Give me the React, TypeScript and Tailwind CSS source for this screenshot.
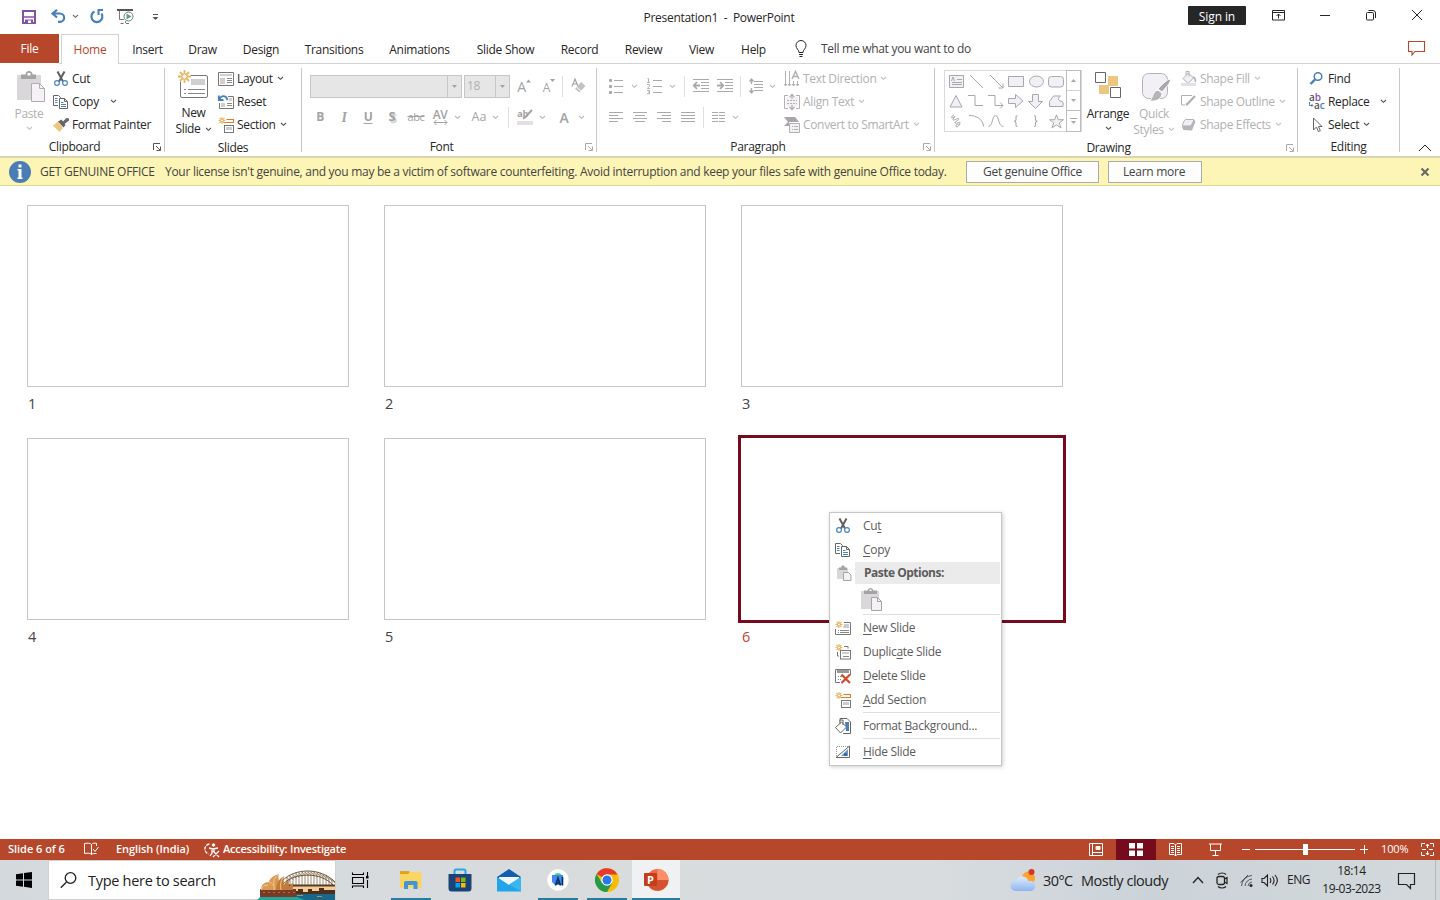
import React from "react";

type Kids = { children?: React.ReactNode };

function S({ w, h, c = "", children }: Kids & { w: number; h: number; c?: string }) {
  return (
    <svg width={w} height={h} viewBox={`0 0 ${w} ${h}`} fill="none" stroke="currentColor" strokeWidth="1" className={`shrink-0 overflow-visible ${c}`}>
      {children}
    </svg>
  );
}

function Chev({ c = "" }: { c?: string }) {
  return (
    <S w={7} h={5} c={c}>
      <path d="M1 1l2.500 2.300L6 1" strokeWidth="1.100" opacity=".8" />
    </S>
  );
}

/* ---------- shared icons ---------- */
const Scissors = () => (
  <S w={16} h={16}>
    <path d="M4.500.5L10 10.500M11.500.5L6 10.500" stroke="#5f5f5f" strokeWidth="2" />
    <circle cx="4" cy="12" r="2.400" stroke="#4a86bd" strokeWidth="1.200" fill="#fff" />
    <circle cx="12" cy="12" r="2.400" stroke="#4a86bd" strokeWidth="1.200" fill="#fff" />
  </S>
);
const CopyIcon = () => (
  <S w={16} h={16}>
    <path d="M5 11.500H.5V1.500h5l2 2V5" stroke="#666" fill="#fff" />
    <path d="M2 4.500h2.500M2 6.500h2.500M2 8.500h2.500" stroke="#4a86bd" />
    <path d="M6.500 4.500h5l3 3v7h-8z" stroke="#666" fill="#fff" />
    <path d="M11.500 4.500v3h3" stroke="#666" />
    <path d="M8 8.500h2.500M8 10.500h5M8 12.500h5" stroke="#4a86bd" />
  </S>
);
const Brush = () => (
  <S w={16} h={14}>
    <path d="M0 7.500l5-4 5 6.500-3.500 4z" fill="#edc77f" stroke="none" />
    <path d="M5 3.500l3.500-2 4 5.500-2 2.500z" fill="#666" stroke="none" />
    <path d="M9.500 4l1-1L13.500 0 16 .5v2L11.500 6z" fill="#666" stroke="none" />
  </S>
);
const BigPaste = () => (
  <S w={30} h={31}>
    <rect x="1" y="4" width="24" height="25" rx="1" fill="#dad7da" stroke="none" />
    <path d="M5 3.500h4.500a3.500 3.500 0 017 0H20V8H5z" fill="#a6a3a6" stroke="none" />
    <rect x="11.500" y="2" width="3" height="2.500" fill="#fff" stroke="none" />
    <path d="M15.500 12.500h8l5 5v13h-13z" fill="#f5f1f7" stroke="#b0adb0" />
    <path d="M23.500 12.500v5h5" stroke="#b0adb0" />
  </S>
);
const SmallPaste = () => (
  <S w={16} h={16}>
    <path d="M1 3h11v11H1z" fill="#dad7da" stroke="none" />
    <path d="M3 5V2.500h2L6 .5h2l1 2h2V5z" fill="#a6a3a6" stroke="none" />
    <path d="M7.500 7.500h5l2.500 2.500v5.500H7.500z" fill="#f5f1f7" stroke="#a6a3a6" />
  </S>
);
const Star = () => (
  <>
    <path d="M4 0v2.500M4 4.500V7M.5 3.500H3M5 3.500h2.500M1.500 1l1.500 1.500M6.500 1L5 2.500M1.500 6L3 4.500M6.500 6L5 4.500" stroke="#e8b765" strokeWidth="1.100" />
    <circle cx="4" cy="3.500" r="1.400" stroke="#e8b765" />
  </>
);
const SectionIcon = () => (
  <S w={16} h={16}>
    <Star />
    <path d="M8.500 2.500h7M15.500 2v4M6 5.500h10" stroke="#e07a2c" />
    <rect x="6.500" y="8.500" width="9" height="7" stroke="#777" fill="#fff" />
    <path d="M8 10h6v3H8z" fill="#ccc" stroke="none" />
  </S>
);

/* ---------- title bar ---------- */
function TitleBar() {
  return (
    <header className="flex h-[34px] shrink-0 items-center">
      <div className="flex w-[500px] items-center pl-[22px] text-[#4a7fb8]">
        <S w={14} h={14}>
          <path d="M1 1h12v12H1z" stroke="#8453a9" strokeWidth="2" />
          <path d="M2 7h10" stroke="#8453a9" strokeWidth="1.500" />
          <path d="M3 9.500h8V13H3z" fill="#8453a9" stroke="none" />
          <path d="M6 10.500h3V13H6z" fill="#fff" stroke="none" />
        </S>
        <S w={15} h={14} c="-mt-[2px] ml-[15px]">
          <path d="M6 .8L1.500 4.500 6 8.500M2 4.500h7a4 4 0 010 8.300H7" stroke="#477fb9" strokeWidth="2.200" />
        </S>
        <Chev c="-mt-[2px] ml-[6px] text-[#444]" />
        <S w={14} h={15} c="-mt-[2px] ml-[11px]">
          <path d="M4.500 2.600A5.500 5.500 0 1011.500 4.500" stroke="#477fb9" strokeWidth="2.200" />
          <path d="M13 1H8.500v5" stroke="#477fb9" strokeWidth="2" />
        </S>
        <S w={17} h={16} c="ml-[13px]">
          <path d="M0 1h16" stroke="#555" strokeWidth="2" />
          <path d="M2.500 2v8.500H7M8.500 12v2M3.500 14.500h3M9 14.500h3" stroke="#777" />
          <circle cx="11.500" cy="7.500" r="4.500" fill="#fff" stroke="#777" />
          <path d="M9.500 4.500l5 3-5 3z" fill="#58a37e" stroke="none" />
        </S>
        <S w={7} h={8} c="ml-[18px] text-[#555]">
          <path d="M1 1.500h5" />
          <path d="M.5 4h6l-3 3z" fill="#555" stroke="none" />
        </S>
      </div>
      <div className="w-[438px] pt-px text-center text-[12px] tracking-[-0.300px]">Presentation1&nbsp; -&nbsp; PowerPoint</div>
      <div className="-mt-[3px] ml-[250px] flex h-[19px] w-[58px] items-center justify-center rounded-[1px] bg-[#262626] pt-[2px] text-[12px] tracking-[-0.100px] text-white">Sign in</div>
      <S w={13} h={11} c="-mt-[3px] ml-[26px]">
        <path d="M.5.500h12v9.500H.5zM.5 2.500h12M6.500 8.500V4M4.500 6l2-2 2 2" />
      </S>
      <S w={10} h={10} c="-mt-[3px] ml-[35px]"><path d="M0 4.500h10" /></S>
      <S w={10} h={11} c="-mt-[3px] ml-[36px]">
        <rect x=".5" y="2.500" width="7" height="7.500" rx="1" />
        <path d="M2.500.5H7a2.500 2.500 0 012.500 2.500v5" />
      </S>
      <S w={10} h={10} c="-mt-[4px] ml-[36px]"><path d="M0 0l10 10M10 0L0 10" /></S>
    </header>
  );
}

/* ---------- tabs ---------- */
function Tab({ w, children }: Kids & { w: string }) {
  return <div className={`flex shrink-0 items-center justify-center border-b border-[#d2d2d2] pt-[2px] ${w}`}>{children}</div>;
}
function Tabs() {
  return (
    <nav className="flex h-[30px] shrink-0 text-[12px] tracking-[-0.290px]">
      <div className="flex h-[29px] w-[59px] items-center justify-center bg-[#b7472a] pt-px text-white">File</div>
      <div className="w-[2px] border-b border-[#d2d2d2]" />
      <div className="flex w-[58px] items-center justify-center border-x border-t border-[#d2d2d2] pt-px text-[#b7472a]">Home</div>
      <Tab w="w-[57px]">Insert</Tab>
      <Tab w="w-[53px]">Draw</Tab>
      <Tab w="w-[64px]">Design</Tab>
      <Tab w="w-[82px]">Transitions</Tab>
      <Tab w="w-[89px]">Animations</Tab>
      <Tab w="w-[83px]">Slide Show</Tab>
      <Tab w="w-[65px]">Record</Tab>
      <Tab w="w-[63px]">Review</Tab>
      <Tab w="w-[53px]">View</Tab>
      <Tab w="w-[51px]">Help</Tab>
      <div className="flex flex-1 items-center border-b border-[#d2d2d2] pl-[16px]">
        <S w={12} h={17}>
          <path d="M4 12.500c0-3-3-3.500-3-7a5 5 0 0110 0c0 3.500-3 4-3 7zM4 14.500h4M4.500 16.500h3" />
        </S>
        <span className="ml-[14px] text-[#444]">Tell me what you want to do</span>
        <S w={17} h={15} c="ml-auto mr-[15px] text-[#b7472a]">
          <path d="M.5.500h16v10H7l-3 3.500v-3.500H.5z" strokeWidth="1.100" />
        </S>
      </div>
    </nav>
  );
}

/* ---------- ribbon ---------- */
function Group({ w, label, lw = "", off = false, children }: Kids & { w: string; label: string; lw?: string; off?: boolean }) {
  return (
    <section className={`flex shrink-0 flex-col ${w}`}>
      <div className="flex h-[74px] pt-[3px]">{children}</div>
      <div className="flex h-[20px] items-center pt-[2px]">
        <div className={`flex-1 text-center ${lw ? "pr-[4px]" : ""}`}>{label}</div>
        {lw && (
          <div className={`${lw} ${off ? "text-[#aaa]" : "text-[#555]"}`}>
            <S w={8} h={8}>
              <path d="M.5 7V.5H7M3 3l4 4M7.500 3.500v4h-4" />
            </S>
          </div>
        )}
      </div>
    </section>
  );
}
const Sep = () => <div className="mt-[4px] h-[84px] w-px shrink-0 bg-[#c8c8c8]" />;
const MiniSep = ({ c }: { c: string }) => <div className={`h-[21px] w-px bg-[#dedede] ${c}`} />;
function Row({ icon, children, c = "" }: Kids & { icon: React.ReactNode; c?: string }) {
  return (
    <div className="flex h-[23px] items-center whitespace-nowrap">
      <div className="flex w-[19px] shrink-0">{icon}</div>
      <span>{children}</span>
      {c && <Chev c={c} />}
    </div>
  );
}
const Cell = ({ w = "w-[24px]", children }: Kids & { w?: string }) => (
  <div className={`flex shrink-0 items-center justify-center ${w}`}>{children}</div>
);
const Lines = ({ d, w = 16 }: { d: string; w?: number }) => (
  <S w={w} h={14}><path d={d} shapeRendering="crispEdges" /></S>
);

function Clipboard() {
  return (
    <Group w="w-[164px]" label="Clipboard" lw="w-[11px]">
      <div className="flex w-[52px] flex-col items-center pl-[6px] text-[#b1b1b1]">
        <div className="mt-[4px] h-[32px] pl-[4px]"><BigPaste /></div>
        <span className="mt-[2px] leading-[18px]">Paste</span>
        <Chev c="mt-[3px]" />
      </div>
      <div className="pl-[1px]">
        <Row icon={<Scissors />}>Cut</Row>
        <Row icon={<CopyIcon />} c="ml-[11px]">Copy</Row>
        <Row icon={<Brush />}>Format Painter</Row>
      </div>
    </Group>
  );
}
function Slides() {
  return (
    <Group w="w-[136px]" label="Slides">
      <div className="flex w-[53px] flex-col items-center pl-[4px]">
        <div className="mt-[3px] h-[34px]">
          <S w={31} h={30}>
            <rect x="2.500" y="5.500" width="27" height="22" rx="1.500" stroke="#777" />
            <path d="M13 9h14v6H13z" fill="#cfcfcf" stroke="none" />
            <path d="M6 19.500h2M10 19.500h17M6 23.500h2M10 23.500h17" stroke="#888" />
            <circle cx="6.500" cy="6.500" r="6.500" fill="#fff" stroke="none" />
            <path d="M6.500 0v4M6.500 9v4M0 6.500h4M9 6.500h4M2 2l3 3M11 2L8 5M2 11l3-3M11 11L8 8" stroke="#e8b765" strokeWidth="1.800" />
            <circle cx="6.500" cy="6.500" r="2.500" stroke="#e8b765" />
          </S>
        </div>
        <span className="mt-px leading-[16px]">New</span>
        <span className="flex items-center gap-[4px] leading-[16px]">Slide <Chev /></span>
      </div>
      <div>
        <Row c="ml-[4px]" icon={<S w={16} h={14}><path d="M.5.500h15v13H.5z" stroke="#777" /><path d="M2 2h12v2H2zM2 6h5v6H2z" fill="#cfcfcf" stroke="none" /><path d="M9 6.500h5M9 8.500h5M9 10.500h5" stroke="#888" /></S>}>Layout</Row>
        <Row icon={<S w={16} h={15}><path d="M10 2.500h5.500v12h-14V9" stroke="#777" /><path d="M3 9h4v4H3zM11 4h3v3h-3z" fill="#cfcfcf" stroke="none" /><path d="M9 9.500h5M9 11.500h5" stroke="#888" /><path d="M.8 1.500V6H5.500M1.500 5C3.500 1 8.500 1 9.500 6" stroke="#477fb9" strokeWidth="1.800" /></S>}>Reset</Row>
        <Row c="ml-[4px]" icon={<SectionIcon />}>Section</Row>
      </div>
    </Group>
  );
}
function FontGroup() {
  return (
    <Group w="w-[294px]" label="Font" lw="w-[11px]" off>
      <div className="flex flex-col text-[#a3a3a3]">
        <div className="flex h-[38px] items-center pl-[8px]">
          <div className="flex h-[23px] w-[152px] border border-[#c6c6c6] bg-[#e6e6e6]">
            <div className="w-[137px] border-r border-[#c6c6c6]" />
            <Cell w="w-[13px]"><S w={5} h={3}><path d="M0 0h5L2.500 3z" fill="currentColor" stroke="none" /></S></Cell>
          </div>
          <div className="ml-[2px] flex h-[23px] w-[46px] border border-[#c6c6c6] bg-[#e6e6e6]">
            <div className="flex w-[31px] items-center border-r border-[#c6c6c6] pl-[2px] text-[12px] text-[#b1b1b1]">18</div>
            <Cell w="w-[13px]"><S w={5} h={3}><path d="M0 0h5L2.500 3z" fill="currentColor" stroke="none" /></S></Cell>
          </div>
          <Cell w="w-[28px]"><span className="text-[14px] font-medium">A</span><S w={5} h={12}><path d="M0 2.500h5L2.500-.5z" fill="currentColor" stroke="none" /></S></Cell>
          <Cell w="w-[22px]"><span className="pt-[3px] text-[12px] font-medium">A</span><S w={5} h={12}><path d="M0-1h5L2.500 2z" fill="currentColor" stroke="none" /></S></Cell>
          <MiniSep c="ml-[2px]" />
          <S w={15} h={16} c="ml-[8px]">
            <path d="M1 8.500L4 1l3 7.500M2 6h4" strokeWidth="1.200" />
            <path d="M10 4l4.500 4-6 6.500L4 11z" fill="#c4c0c4" stroke="none" />
            <path d="M5.500 9l4.500 4" stroke="#fff" />
          </S>
        </div>
        <div className="flex h-[24px] items-center pl-[6px]">
          <Cell><b>B</b></Cell>
          <Cell><i className="font-['Liberation_Serif'] text-[14px] font-bold">I</i></Cell>
          <Cell><b className="text-[12px] underline underline-offset-2">U</b></Cell>
          <Cell><b className="text-[13px] [text-shadow:1.5px_1.5px_1px_#ccc]">S</b></Cell>
          <Cell><span className="text-[11px] line-through">abc</span></Cell>
          <Cell>
            <div className="flex flex-col items-center">
              <span className="h-[11px] text-[12px] font-semibold leading-[12px] tracking-[-0.500px]">AV</span>
              <S w={15} h={5}><path d="M1 2.500h13M3.500 0L1 2.500 3.500 5M11.500 0L14 2.500 11.500 5" /></S>
            </div>
          </Cell>
          <Cell w="w-[10px]"><Chev /></Cell>
          <Cell w="w-[34px]"><span className="text-[12.500px] font-medium tracking-normal">Aa</span></Cell>
          <Chev c="-ml-[4px]" />
          <MiniSep c="ml-[9px]" />
          <Cell w="w-[31px]">
            <S w={16} h={16}>
              <text x="0" y="8" fontSize="9.500" fontWeight="bold" fill="#a3a3a3" stroke="none">ab</text>
              <path d="M15 1L8 8.500l-2 1" strokeWidth="2" />
              <path d="M0 12h16v4H0z" fill="#e4dfe6" stroke="none" />
            </S>
          </Cell>
          <Chev c="-ml-[1px]" />
          <Cell w="w-[36px]"><span className="text-[14px] font-semibold">A</span></Cell>
          <Chev c="-ml-[4px]" />
        </div>
      </div>
    </Group>
  );
}
function Paragraph() {
  return (
    <Group w="w-[337px]" label="Paragraph" lw="w-[11px]" off>
      <div className="flex w-[187px] flex-col text-[#aaa]">
        <div className="flex h-[38px] items-center pl-[12px]">
          <S w={14} h={16}><path d="M5 2.500h9M5 8.500h9M5 14.500h9" /><path d="M.5 1h2L3 1.500v2l-.5.5h-2L0 3.500v-2zM.5 7h2l.5.500v2l-.5.5h-2L0 9.500v-2zM.5 13h2l.5.500v2l-.5.5h-2L0 15.500v-2z" fill="currentColor" stroke="none" /></S>
          <Chev c="ml-[8px]" />
          <S w={15} h={16} c="ml-[9px]">
            <path d="M6 2.500h9M6 8.500h9M6 14.500h9" />
            <path d="M.5.500h1v4M0 4.500h3M0 6.500h2.500v1.500L.3 10.500h2.700M0 12.500h2.500v3.200H0M1 14h1.500" strokeWidth=".9" />
          </S>
          <Chev c="ml-[7px]" />
          <MiniSep c="ml-[8px]" />
          <S w={16} h={14} c="ml-[8px]"><path d="M0 .5h16M8 3.500h8M8 6.500h8M8 9.500h8M0 12.500h16" /><path d="M0 6.500h7M4 3L.8 6.500 4 10" strokeWidth="1.800" /></S>
          <S w={16} h={14} c="ml-[8px]"><path d="M0 .5h16M8 3.500h8M8 6.500h8M8 9.500h8M0 12.500h16" /><path d="M0 6.500h7M3 3l3.200 3.500L3 10" strokeWidth="1.800" /></S>
          <MiniSep c="ml-[7px]" />
          <S w={14} h={16} c="ml-[8px]"><path d="M5 3.500h9M5 6.500h9M5 9.500h9M5 12.500h9" /><path d="M2.500 1v5M.5 3.500l2-2.500 2 2.500M2.500 10v5M.5 12.500l2 2.500 2-2.500" strokeWidth="1.400" /></S>
          <Chev c="ml-[6px]" />
        </div>
        <div className="flex h-[24px] items-center pl-[12px]">
          <Cell w="w-[14px]"><Lines w={14} d="M0 2.500h14M0 5.500h9M0 8.500h14M0 11.500h9" /></Cell>
          <Cell w="w-[14px] ml-[10px]"><Lines w={14} d="M0 2.500h14M2 5.500h10M0 8.500h14M2 11.500h10" /></Cell>
          <Cell w="w-[14px] ml-[10px]"><Lines w={14} d="M0 2.500h14M5 5.500h9M0 8.500h14M5 11.500h9" /></Cell>
          <Cell w="w-[14px] ml-[10px]"><Lines w={14} d="M0 2.500h14M0 5.500h14M0 8.500h14M0 11.500h14" /></Cell>
          <MiniSep c="ml-[8px]" />
          <Cell w="w-[14px] ml-[8px]"><Lines w={14} d="M0 2.500h6M7 2.500h6M0 5.500h6M7 5.500h6M0 8.500h6M7 8.500h6M0 11.500h6M7 11.500h6" /></Cell>
          <Chev c="ml-[6px]" />
        </div>
      </div>
      <div className="text-[#b1b1b1]">
        <Row c="ml-[4px]" icon={<S w={16} h={16}><path d="M1.500 0v15M5.500 0v15M9.500 10v5M13.500 10v5M0 13l1.500 2L3 13M4 13l1.500 2L7 13M8 13l1.500 2L11 13M12 13l1.500 2L15 13" /><path d="M8 8l3.500-7.500L15 8M9 5.500h5" strokeWidth="1.500" /></S>}>Text Direction</Row>
        <Row c="ml-[4px]" icon={<S w={16} h={16}><path d="M4 1.500H.5v13H4M12 1.500h3.500v13H12" /><path d="M2 3h12v10H2z" fill="#f5f1f7" stroke="none" /><path d="M3 6.500h10M3 9.500h10" strokeDasharray="2 1" /><path d="M8 0v5M5.500 3L8 .5 10.500 3M8 11v5M5.500 13L8 15.500l2.500-2.500" strokeWidth="1.300" /></S>}>Align Text</Row>
        <Row c="ml-[4px]" icon={<S w={16} h={16}><path d="M0 0h11l4 5H5v4H0l4-4z" fill="#a9a6a9" stroke="none" /><path d="M5.500 6.500h10v9h-10z" fill="#f5f1f7" /><path d="M8 9.500h1M10 9.500h4M8 12.500h1M10 12.500h4" /></S>}>Convert to SmartArt</Row>
      </div>
    </Group>
  );
}
function Drawing() {
  const f = "#f3eff6";
  return (
    <Group w="w-[362px]" label="Drawing" lw="w-[11px]" off>
      <div className="ml-[9px] mt-[3px] flex h-[62px] w-[138px] border border-[#d9d9d9] text-[#a8a8a8]">
        <div className="grid w-[122px] grid-cols-[20px_20px_20px_20px_20px_20px] grid-rows-[20px_20px_20px] place-items-center pl-px">
          <S w={15} h={13}><path d="M.5.500h14v12H.5z" fill={f} /><path d="M8 4.500h5M3 7.500h10M3 9.500h10M2.500 6l1.500-4 1.500 4" /></S>
          <S w={15} h={15}><path d="M1 1l13 13" /></S>
          <S w={15} h={15}><path d="M1 1l13 13M14 9.500V14H9.500" /></S>
          <S w={16} h={13}><path d="M.5 1.500h15v10H.5z" fill={f} /></S>
          <S w={15} h={13}><ellipse cx="7.500" cy="6.500" rx="7" ry="5.500" fill={f} /></S>
          <S w={16} h={13}><rect x=".5" y="1.500" width="15" height="10.500" rx="3" fill={f} /></S>
          <S w={14} h={14}><path d="M7 1.500l6 11.500H1z" fill={f} /></S>
          <S w={16} h={14}><path d="M0 1.500h7v10h8" /></S>
          <S w={16} h={14}><path d="M0 1.500h7v10h8M12 8.500l3 3-3 3" /></S>
          <S w={16} h={14}><path d="M.5 4.500h7v-4l7.500 6.500-7.500 6.500v-4h-7z" fill={f} /></S>
          <S w={16} h={15}><path d="M4.500.500h6v7h4L7.500 14.500l-7-7h4z" fill={f} /></S>
          <S w={15} h={14}><path d="M.5 12.500v-5l4-5.500h7c-4 3-2 5 2 5.500 1 1 .5 4 .5 5z" fill={f} /></S>
          <S w={12} h={15}><path d="M4 1C0 3 1 5 4 3 7 1 2 5 3 6c1 1 6-3 6-1 0 1-5 3-4 4 2 1 5-2 5 0 0 3-4 5-4 3s3-3 3-1" /></S>
          <S w={15} h={14}><path d="M0 1.500c8 0 14 4 14.500 11" /></S>
          <S w={16} h={14}><path d="M.5 12.500C5 12 4 1.500 7.500 1.500S10 12.500 15.500 12.500" /></S>
          <S w={6} h={13}><path d="M4.500.8H4Q3 .8 3 2v2.700Q3 6 1 6.200 3 6.500 3 8v2.300q0 1.200 1 1.200h.5" strokeWidth="1.100" /></S>
          <S w={6} h={13}><path d="M1 .8h.5q1 0 1 1.200v2.700q0 1.300 2 1.500-2 .3-2 1.800v2.300q0 1.200-1 1.200H1" strokeWidth="1.100" /></S>
          <S w={15} h={15}><path d="M7.500.8l1.800 4.900h5.200l-4.200 3.200 1.700 5.100-4.500-3.200L3 14l1.700-5.100L.5 5.700h5.200z" fill={f} /></S>
        </div>
        <div className="-my-px flex w-[15px] flex-col border border-[#bdbdbd]">
          <Cell w="h-[20px] border-b border-[#d4d4d4]"><S w={5} h={3}><path d="M0 3h5L2.500 0z" fill="currentColor" stroke="none" /></S></Cell>
          <Cell w="h-[20px] border-b border-[#bdbdbd]"><S w={5} h={3}><path d="M0 0h5L2.500 3z" fill="currentColor" stroke="none" /></S></Cell>
          <Cell w="h-[20px]"><S w={7} h={7}><path d="M0 .5h7" /><path d="M1 3h5L3.500 6z" fill="currentColor" stroke="none" /></S></Cell>
        </div>
      </div>
      <div className="flex w-[52px] flex-col items-center">
        <div className="mt-[4px] h-[33px]">
          <S w={28} h={28} c="-ml-px">
            <path d="M14 5h10v10H14zM5 14h10v9H5z" fill="#edc77f" stroke="none" />
            <path d="M1.500 1.500h10v10h-10zM16.500 16.500h10v10h-10z" fill="#fff" stroke="#666" />
          </S>
        </div>
        <span className="mt-px leading-[18px]">Arrange</span>
        <Chev c="mt-[3px]" />
      </div>
      <div className="flex w-[44px] flex-col items-center pr-[4px] text-[#b1b1b1]">
        <div className="mt-[5px] h-[32px]">
          <S w={31} h={31} c="ml-[2px]">
            <rect x="2.500" y="1.500" width="25" height="25" rx="6" fill={f} stroke="#b5b2b5" />
            <path d="M30 7c2 3-5 9-8 13l-4-3c4-5 10-10 12-10z" fill="#a9a6a9" stroke="#fff" />
            <path d="M18 18l4 3c0 5-4 9-13 8 4-1 3-10 9-11z" fill="#b8b5b8" stroke="#fff" />
          </S>
        </div>
        <span className="mt-px leading-[17px]">Quick</span>
        <span className="flex items-center gap-[4px] leading-[15px]">Styles <Chev /></span>
      </div>
      <div className="pl-[3px] text-[#b1b1b1]">
        <Row c="ml-[4px]" icon={<S w={16} h={16}><path d="M2 7.500L7.500 2l5 5L7 12.500zM5 4V.5h3v5" fill={f} /><path d="M12 6c2 1 3 3 2 5" strokeWidth="1.600" /><path d="M0 12h15v3H0z" fill="#e4dfe6" stroke="none" /></S>}>Shape Fill</Row>
        <Row c="ml-[4px]" icon={<S w={16} h={16}><path d="M11 1.500H.5v9.500H4" /><path d="M14 2L7 9.500l-2 1.500" strokeWidth="2.200" /></S>}>Shape Outline</Row>
        <Row c="ml-[4px]" icon={<S w={16} h={14}><path d="M5 1h7.500l2 2.500-3.500 9-8.500-.5L1 9z" fill="#b8b5b8" stroke="none" /><path d="M5.500 1.500h6q1.500 0 1 1.500l-2 4q-.5 1-2 1H3q-2 0-1.500-1.500l2-4q.5-1 2-1z" fill={f} /></S>}>Shape Effects</Row>
      </div>
    </Group>
  );
}
function Editing() {
  return (
    <Group w="w-[101px]" label="Editing">
      <div className="pl-[11px]">
        <Row icon={<S w={15} h={14}><circle cx="9" cy="4.500" r="3.800" stroke="#477fb9" strokeWidth="1.500" /><path d="M6 7.500L1.500 12" stroke="#477fb9" strokeWidth="2.400" /></S>}>Find</Row>
        <Row c="ml-[11px]" icon={
          <div className="grid h-[17px] w-[17px] grid-rows-[8px_8px] text-[10px] font-semibold leading-[8px] tracking-normal text-[#555]">
            <div>a<span className="text-[#8453a9]">b</span></div>
            <div className="flex items-center">
              <S w={5} h={7}><path d="M.5 0v3.500h3M2.500 2L4 3.500 2.500 5" stroke="#477fb9" /></S>
              a<span className="text-[#477fb9]">c</span>
            </div>
          </div>
        }>Replace</Row>
        <Row c="ml-[4px]" icon={<S w={14} h={16}><path d="M4.500 1v12l3-3 1.800 4.500 2-.8L9.500 9.500h3.500z" stroke="#666" /></S>}>Select</Row>
      </div>
    </Group>
  );
}
function Ribbon() {
  return (
    <div className="flex h-[93px] shrink-0 border-b border-[#d2d2d2] text-[12px] tracking-[-0.330px]">
      <Clipboard /><Sep /><Slides /><Sep /><FontGroup /><Sep /><Paragraph /><Sep /><Drawing /><Sep /><Editing /><Sep />
      <div className="flex flex-1 items-end justify-center pb-[4px] pl-[9px]">
        <S w={14} h={8}><path d="M1 7l6-6 6 6" /></S>
      </div>
    </div>
  );
}

function LicenseBar() {
  return (
    <div className="flex h-[29px] shrink-0 items-center border-y border-[#dcd98c] bg-[#fcf5b5] text-[12px] text-[#444]">
      <S w={22} h={22} c="ml-[9px]">
        <circle cx="11" cy="11" r="11" fill="#4a7db5" stroke="none" />
        <path d="M9.500 3.500h3v3h-3zM8.500 8h4v8.500h1V18h-5v-1.500h1V9.500h-1z" fill="#fff" stroke="none" />
      </S>
      <span className="ml-[9px] w-[125px] whitespace-nowrap pt-px tracking-[-0.280px]">GET GENUINE OFFICE</span>
      <span className="w-[801px] whitespace-nowrap tracking-[-0.285px]">Your license isn't genuine, and you may be a victim of software counterfeiting. Avoid interruption and keep your files safe with genuine Office today.</span>
      <button className="h-[22px] w-[133px] border border-[#ababab] bg-[#fdfdfd] tracking-[-0.280px]">Get genuine Office</button>
      <button className="ml-[9px] h-[22px] w-[94px] border border-[#ababab] bg-[#fdfdfd] pr-[2px] tracking-[-0.280px]">Learn more</button>
      <S w={8} h={8} c="ml-auto mr-[11px] text-[#666]"><path d="M.5.500l7 7M7.500.5l-7 7" strokeWidth="2" /></S>
    </div>
  );
}

/* ---------- slide sorter and menu ---------- */
function Sorter() {
  return (
    <main className="relative flex-1 bg-white pl-[27px] pt-[19px]">
      <div className="grid grid-cols-[357px_357px_357px]">
        {[1, 2, 3, 4, 5, 6].map((n) => (
          <div key={n} className="h-[233px] w-[322px]">
            <div className={n === 6 ? "-m-[3px] h-[188px] w-[328px] border-3 border-[#750b1c]" : "h-[182px] w-[322px] border border-[#c6c6c6]"} />
            <div className={`pl-px pt-[6px] text-[14.500px] leading-[22px] ${n === 6 ? "text-[#c0452b]" : "text-[#444]"}`}>{n}</div>
          </div>
        ))}
      </div>
      <ContextMenu />
    </main>
  );
}
function Item({ icon, children, h = "h-[24px]" }: Kids & { icon: React.ReactNode; h?: string }) {
  return (
    <div className={`flex items-center ${h}`}>
      <div className="flex w-[28px] shrink-0">{icon}</div>
      <span>{children}</span>
    </div>
  );
}
const MenuRule = () => <div className="-mr-px ml-[28px] h-px bg-[#dedede]" />;
const U = ({ children }: Kids) => <span className="underline underline-offset-[1.500px]">{children}</span>;
function ContextMenu() {
  return (
    <div className="absolute left-[829px] top-[326px] h-[254px] w-[173px] border border-[#c6c6c6] bg-white py-px pl-[5px] pr-[2px] text-[12px] tracking-[-0.300px] text-[#5c5c5c] shadow-[1px_1px_4px_rgba(0,0,0,0.2)]">
      <Item icon={<Scissors />}>Cu<U>t</U></Item>
      <Item icon={<CopyIcon />}><U>C</U>opy</Item>
      <div className="flex h-[22px] items-center">
        <div className="w-[20px] shrink-0 pl-px"><SmallPaste /></div>
        <div className="-mr-px flex h-[22px] flex-1 items-center bg-[#ebebeb] pl-[9px] font-bold tracking-[-0.500px]">Paste Options:</div>
      </div>
      <div className="flex h-[30px] items-center pl-[26px] pt-[2px]">
        <S w={22} h={24}>
          <path d="M0 3h18v18H0z" fill="#dad7da" stroke="none" />
          <path d="M3 6V2.500h3.500Q7 0 9.500 0t3 2.500H16V6z" fill="#a6a3a6" stroke="none" />
          <path d="M8.500 1.500h2v1.500h-2z" fill="#fff" stroke="none" />
          <path d="M10.500 9.500h6l4 4v9h-10z" fill="#f5f1f7" stroke="#a6a3a6" />
          <path d="M16.500 9.500v4h4" stroke="#a6a3a6" />
        </S>
      </div>
      <MenuRule />
      <Item h="mt-px h-[24px]" icon={<S w={16} h={15}><path d="M9 1.500h6.500v12H.5V8" stroke="#777" /><path d="M9 3h5v4H8z" fill="#ccc" stroke="none" /><path d="M3 9.500h1M5 9.500h9M3 11.500h1M5 11.500h9" stroke="#888" /><Star /></S>}><U>N</U>ew Slide</Item>
      <Item icon={<S w={16} h={16}><path d="M9 2.500h4v2M2.500 8v4H4" stroke="#777" /><rect x="5.500" y="6.500" width="10" height="8.500" stroke="#777" fill="#fff" /><path d="M7 8h7v2H7z" fill="#ccc" stroke="none" /><path d="M8 12.500h6" stroke="#888" /><Star /></S>}>Duplic<U>a</U>te Slide</Item>
      <Item icon={<S w={16} h={15}><path d="M5 13.500H.5V.5h15V6" stroke="#777" /><path d="M2 1h12v3H2z" fill="#999" stroke="none" /><path d="M3 7.500h1M5 7.500h2M3 10.500h1M5 10.500h1" stroke="#888" /><path d="M6.500 5.500l8.500 8.500M15 5.500L6.500 14" stroke="#d24b2c" strokeWidth="2.200" /></S>}><U>D</U>elete Slide</Item>
      <Item icon={<SectionIcon />}><U>A</U>dd Section</Item>
      <MenuRule />
      <Item h="h-[25px]" icon={<S w={16} h={16}><path d="M5 4V.5h7l3.500 3.500v11.500H8" stroke="#666" /><path d="M10 4h4v9h-3z" fill="#477fb9" stroke="none" /><path d="M.5 9.500L6.500 4l5 5-6 6zM5 6V2h3v5" fill="#fff" stroke="#666" /></S>}>Format <U>B</U>ackground...</Item>
      <MenuRule />
      <Item h="h-[25px]" icon={<S w={16} h={14}><path d="M1.500 11V1.500H13" stroke="#999" strokeDasharray="1 1" /><path d="M1 12.500h13.500V1z" stroke="#666" fill="#fff" /><path d="M13 4v7H6z" fill="#6b9bc9" stroke="none" /><path d="M9 8h3v3H9z" fill="#3a6ea8" stroke="none" /></S>}><U>H</U>ide Slide</Item>
    </div>
  );
}

/* ---------- status bar ---------- */
function StatusBar() {
  return (
    <footer className="flex h-[21px] shrink-0 items-center bg-[#b7472a] text-[11px] font-semibold tracking-[-0.150px] text-white">
      <span className="w-[84px] pl-[8px] tracking-[-0.030px]">Slide 6 of 6</span>
      <S w={15} h={14} c="-mt-[2px]"><path d="M7.500 12.500C6 11 4 11 .5 11.500v-10C4 1 6 1 7.500 2.500c1-1.500 3-1.500 5-1.200V4M7.500 2.500v10M7.500 12.500c1-1 3-1 5-1M9 7l2 2.500L14.500 5" /></S>
      <span className="ml-[17px] w-[88px] tracking-[-0.060px]">English (India)</span>
      <S w={16} h={16}><path d="M5.500 2C-.5 3 -.5 10 4.500 12" strokeWidth="1.300" strokeDasharray="3.500 1" /><circle cx="9.500" cy="3" r="1.300" fill="#fff" /><path d="M5 6l4 1 5-1M8 7v4l-2 3M10 7v3M9 9l6 6M15 9l-6 6" strokeWidth="1.300" /></S>
      <span className="ml-[3px] tracking-[-0.230px]">Accessibility: Investigate</span>
      <div className="ml-auto flex h-full items-center">
        <S w={14} h={13}><path d="M.5.500h13v12H.5zM3.500 1v11M4 9.500h9" /><path d="M7 3.500h4v3H7z" fill="#fff" /></S>
        <div className="ml-[13px] flex h-full w-[40px] items-center justify-center bg-[#750b1c]">
          <S w={14} h={13}><path d="M0 0h6v5.500H0zM8 0h6v5.500H8zM0 7.500h6V13H0zM8 7.500h6V13H8z" fill="#fff" stroke="none" /></S>
        </div>
        <S w={14} h={13} c="-mt-px ml-[13px]"><path d="M6.500 2v11M.5.500h4.500l1.500 1.500L8 .500h4.500v11H8L6.500 13 5 11.500H.5zM2 3.500h3M2 5.500h3M2 7.500h3M2 9.500h3M8 3.500h3M8 5.500h3M8 7.500h3M8 9.500h3" /></S>
        <S w={13} h={13} c="ml-[26px]"><path d="M0 1h13M1.500 1v6.500h10V1M6.500 8v4.500M3.500 12.500h6" /></S>
        <S w={8} h={9} c="ml-[20px]"><path d="M0 4.500h8" /></S>
        <div className="ml-[5px] flex h-[11px] w-[100px] items-center">
          <div className="h-px w-[48px] bg-white" />
          <div className="h-[11px] w-[5px] bg-white" />
          <div className="h-px flex-1 bg-white" />
        </div>
        <S w={8} h={9} c="ml-[5px]"><path d="M0 4.500h8M4.500 0v9" /></S>
        <span className="ml-[13px] w-[40px] font-medium">100%</span>
        <S w={13} h={13} c="mr-[6px]"><path d="M.5 4V.5H4M9 .5h3.500V4M12.500 9v3.500H9M4 12.500H.5V9M6.500 1v4M5 3l1.500-2L8 3M6.500 12V8M5 10l1.500 2L8 10M1 6.500h4M12 6.500H8" /></S>
      </div>
    </footer>
  );
}

/* ---------- taskbar ---------- */
function TaskApp({ children, mark, c }: Kids & { mark?: boolean; c: string }) {
  return (
    <div className={`flex h-[40px] shrink-0 flex-col ${c}`}>
      <div className="flex h-[38px] items-center justify-center pt-[2px]">{children}</div>
      <div className={`h-[2px] ${mark ? "bg-[#267ca1]" : ""}`} />
    </div>
  );
}
function OperaHouse() {
  const ribs = [30, 33, 36, 39, 42, 45, 48, 51, 54, 57, 60, 63, 66, 69, 72, 75];
  return (
    <S w={78} h={31}>
      <path d="M30 16h48v10H30z" fill="#efcf9a" stroke="none" />
      {ribs.map((x) => {
        const y = 2.5 + Math.pow((x - 51) / 29, 2) * 11;
        return <path key={x} d={`M${x} ${y}V16M${x} ${y}l3 4`} stroke="#85704f" strokeWidth=".8" />;
      })}
      <path d="M25 12C38-1.500 64-1.500 78 13M26 15C38 3 64 3 76 16" stroke="#6d5638" strokeWidth="1" />
      <path d="M30 16.500h48" stroke="#5a3c23" strokeWidth="2" />
      <path d="M36 22h5v-2h5v3h5v-3h4v2h7v-3h5v2h11v5H36z" fill="#512d1d" stroke="none" />
      <path d="M24 25h54v6H24z" fill="#17678b" stroke="none" />
      <path d="M40 26h6v1h-6zM60 27h5v1h-5z" fill="#c08c46" stroke="none" />
      <path d="M3 20h36v8H3z" fill="#793a25" stroke="none" />
      <path d="M4 21c0-5 3-8 8-8 0-3 5-7 10-8-2 4 2 7-1 16z" fill="#d99a55" stroke="none" />
      <path d="M19 21c0-7 3-11 8-14-1 6 1 8-1 14zM26 21c0-5 2-8 6-10-1 4 1 7 0 10zM32 21c0-4 1-6 4-7v7z" fill="#c17b3a" stroke="none" />
      <path d="M12 13c4 1 6 5 5 8M4 21c1-3 3-5 7-5M22 5c-5 4-6 7-5 12M27 7c-3 4-4 8-3 14" stroke="#f2c88f" />
      <path d="M6 23.500h32" stroke="#b36a3c" strokeDasharray="2 3" />
      <path d="M3 28h37l8 3H0z" fill="#26a69a" stroke="none" />
    </S>
  );
}
function Taskbar() {
  return (
    <div className="flex h-[40px] shrink-0 items-center bg-[linear-gradient(90deg,#d3d9dd_0%,#d9dcdd_45%,#d8dcdf_65%,#cbd3d9_80%,#d3d9db_100%)] text-[15px] text-[#222]">
      <S w={17} h={16} c="ml-[16px] text-black">
        <path d="M0 2.200L7 1.200v6.300H0zM8 1l8-1v7.500H8zM0 8.500h7v6.300l-7-1zM8 8.500h8V16l-8-1.200z" fill="currentColor" stroke="none" />
      </S>
      <div className="ml-[15px] flex h-[40px] w-[288px] items-center border border-[#d0d0d0] bg-white">
        <S w={17} h={17} c="ml-[11px]"><circle cx="10.500" cy="6" r="5.300" strokeWidth="1.300" /><path d="M6.500 10L.8 15.700" strokeWidth="1.300" /></S>
        <span className="ml-[11px] w-[169px] pt-[2px] text-[14.500px] tracking-[-0.290px]">Type here to search</span>
        <div className="mt-[8px]"><OperaHouse /></div>
      </div>
      <S w={18} h={16} c="ml-[15px] text-black">
        <path d="M1.500 2.500V.5M12.500 2.500V.5M1 2.500h12M1.500 5.500h11v6h-11zM1.500 16v-2h11v2M16.500 0v4M16.500 8v8" strokeWidth="1.100" />
        <path d="M15 4h2.500v2.500H15z" fill="currentColor" stroke="none" />
      </S>
      <TaskApp mark c="ml-[22px] w-[40px]">
        <S w={22} h={20}>
          <path d="M0 1h9l1.500 2H20v3H0z" fill="#e2a21a" stroke="none" />
          <path d="M0 4h8l2-2h10l1.500 1.500V18H0z" fill="#fcd462" stroke="none" />
          <path d="M4 19v-6.500Q4 11 5.500 11H16q1.500 0 1.500 1.500V19h-4v-4H8v4z" fill="#3e95d8" stroke="none" />
        </S>
      </TaskApp>
      <TaskApp c="ml-[9px] w-[39px]">
        <S w={24} h={24}>
          <path d="M6.500 7V3Q6.500 1.500 8 1.500h8q1.500 0 1.500 1.500v4" stroke="#25a8e4" strokeWidth="2" />
          <path d="M.5 6h23v14q0 3.500-3 3.500H3.500q-3 0-3-3.500z" fill="#1a4478" stroke="none" />
          <path d="M7.500 9.500H12V14H7.500z" fill="#f25022" stroke="none" /><path d="M13 9.500h4.500V14H13z" fill="#7fba00" stroke="none" />
          <path d="M7.500 15H12v4.500H7.500z" fill="#00a4ef" stroke="none" /><path d="M13 15h4.500v4.500H13z" fill="#ffb900" stroke="none" />
        </S>
      </TaskApp>
      <TaskApp c="ml-[10px] w-[40px]">
        <S w={24} h={23}>
          <path d="M0 8l12-8 12 8v3H0z" fill="#145eb0" stroke="none" />
          <path d="M2 8h20v8H2z" fill="#f4f7fa" stroke="none" />
          <path d="M0 8l12 8L24 8v14.500H0z" fill="#20a5ea" stroke="none" />
          <path d="M12 15.500L24 8v14.500z" fill="#38b6f1" stroke="none" />
        </S>
      </TaskApp>
      <TaskApp mark c="ml-[9px] w-[40px]">
        <S w={22} h={22}>
          <circle cx="11" cy="11" r="10.700" fill="#fff" stroke="none" />
          <path d="M7 6.500a4.500 4.500 0 018 0z" fill="#3ddc84" stroke="none" />
          <path d="M5 6h11v10H8l-3-3z" fill="#4285f4" stroke="none" />
          <path d="M8.500 16.500L11 9l2.500 7.500M9.500 14h3M15.500 8v8.500" stroke="#092f5c" strokeWidth="1.600" />
        </S>
      </TaskApp>
      <TaskApp mark c="ml-[9px] w-[40px]">
        <S w={24} h={24}>
          <circle cx="12" cy="12" r="12" fill="#fbbc09" stroke="none" />
          <path d="M12 12L1.600 6A12 12 0 0122.400 6.500H12z" fill="#e33b2e" stroke="none" />
          <path d="M1.600 6A12 12 0 0012 24l5.200-9L12 12 7 15z" fill="#249a4c" stroke="none" />
          <circle cx="12" cy="12" r="5.700" fill="#fff" stroke="none" /><circle cx="12" cy="12" r="4.500" fill="#2878e8" stroke="none" />
        </S>
      </TaskApp>
      <TaskApp mark c="ml-[5px] w-[48px] bg-[#f0f1f2]">
        <S w={25} h={24}>
          <circle cx="13.500" cy="12" r="11" fill="#ed6c47" stroke="none" />
          <path d="M13.500 1a11 11 0 0111 11h-11z" fill="#ff8f6b" stroke="none" />
          <path d="M24.500 12a11 11 0 01-21 4l10-4z" fill="#d35230" stroke="none" />
          <rect x="0" y="5" width="13" height="13" rx="1" fill="#c43e1c" stroke="none" />
          <text x="3" y="15.500" fontSize="11" fontWeight="bold" fill="#fff" stroke="none">P</text>
        </S>
      </TaskApp>
      <div className="ml-auto flex items-center">
        <S w={26} h={25}>
          <defs><linearGradient id="cl" x1="0" y1="0" x2="0" y2="1"><stop stopColor="#dcecff" /><stop offset="1" stopColor="#8fb5ee" /></linearGradient></defs>
          <circle cx="17.500" cy="10" r="6.500" fill="#fda32b" stroke="none" />
          <circle cx="20.500" cy="4" r="3" fill="#d5342d" stroke="none" />
          <path d="M4.500 23a5 5 0 010-10 7 7 0 0113 0 5 5 0 013 10z" fill="url(#cl)" stroke="none" />
        </S>
        <span className="ml-[6px] w-[38px] pt-[2px] text-[14.500px] tracking-[-0.600px]">30°C</span>
        <span className="w-[111px] whitespace-nowrap pt-[2px] text-[14.500px] tracking-[-0.450px]">Mostly cloudy</span>
        <S w={12} h={8}><path d="M1 7l5-5.500L11 7" strokeWidth="1.300" /></S>
        <S w={12} h={17} c="ml-[12px]"><path d="M2 2.500C4 .500 8 .500 10 2.500M2 14.500c2 2 6 2 8 0M8.500 7l2.500-1.500v6L8.500 10" strokeWidth="1.200" /><rect x="1" y="4.500" width="7.500" height="8" rx="2" strokeWidth="1.300" /></S>
        <S w={13} h={13} c="ml-[12px]"><path d="M1.500 12A11 11 0 0112 1.500M5 12a7.500 7.500 0 017-7M8 12a4.500 4.500 0 014-4M.5 8.500L8 1" stroke="#555" /><circle cx="11" cy="11.500" r="1.500" fill="#222" stroke="none" /></S>
        <S w={17} h={15} c="ml-[8px]"><path d="M1 5.500h2L6.500 2v11L3 9.500H1zM9 5c1 1.500 1 3.500 0 5M11.500 3.500c2 2.500 2 5.500 0 8M14 2c3 3.500 3 7.500 0 11" strokeWidth="1.100" /></S>
        <span className="ml-[9px] w-[30px] text-[12px] tracking-[-0.450px]">ENG</span>
        <div className="w-[69px] text-center text-[12px] leading-[18px] tracking-[-0.420px]"><div>18:14</div><div>19-03-2023</div></div>
        <S w={17} h={17} c="ml-[12px]"><path d="M.5 1.500h16v11h-4v4l-4-4h-8z" strokeWidth="1.200" /></S>
        <div className="ml-[20px] mr-[4px] h-[40px] w-px bg-[#b3babf]" />
      </div>
    </div>
  );
}

export default function App() {
  return (
    <div className="flex h-[900px] w-[1440px] flex-col overflow-hidden bg-white font-['Open_Sans','Noto_Sans',sans-serif] text-[#262626]">
      <TitleBar />
      <Tabs />
      <Ribbon />
      <LicenseBar />
      <Sorter />
      <StatusBar />
      <Taskbar />
    </div>
  );
}
